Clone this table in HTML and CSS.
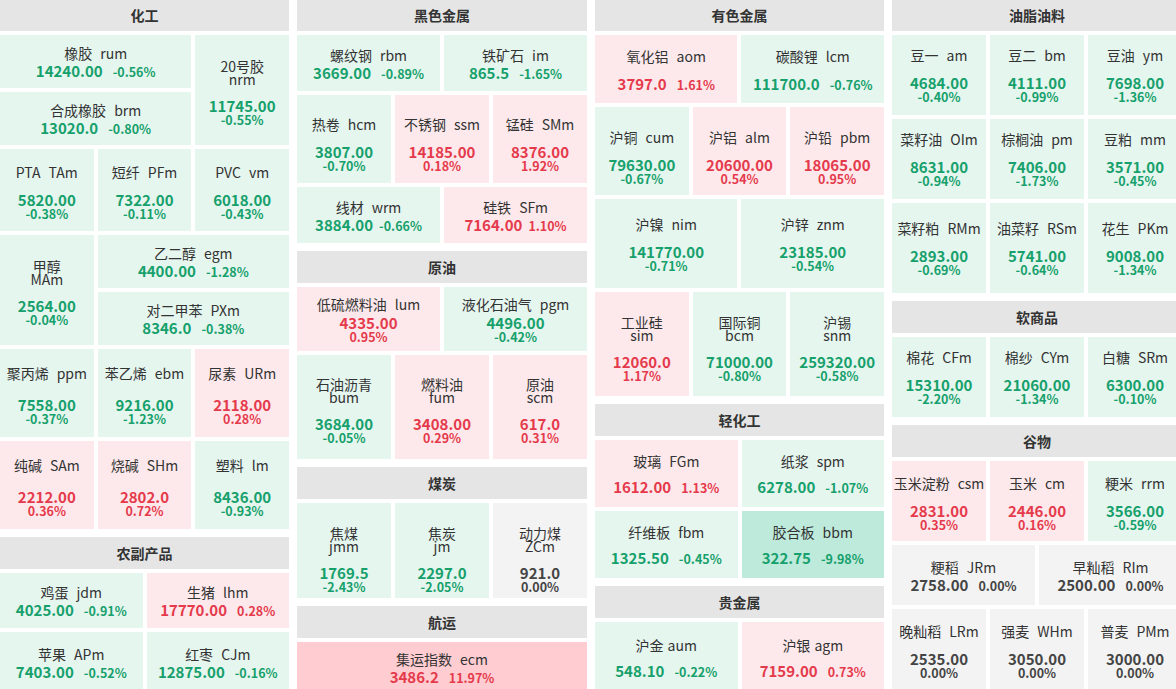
FILE: index.html
```html
<!DOCTYPE html>
<html lang="zh-CN">
<head>
<meta charset="utf-8">
<title>期货行情板块</title>
<link rel="stylesheet" href="styles.css">
</head>
<body>
<div class="board">

  <!-- Column 1 -->
  <div class="col">
    <section class="sec">
      <h2 class="sec-title">化工</h2>
      <div class="grid g-chem">
        <div class="cell dn c4 inline"><div class="name">橡胶<span class="code">rum</span></div><div class="val"><span class="num">14240.00</span><span class="pct">-0.56%</span></div></div>
        <div class="cell dn c2 r2 pad-6"><div class="name two">20号胶<br>nrm</div><div class="val"><span class="num">11745.00</span><span class="pct">-0.55%</span></div></div>
        <div class="cell dn c4 inline"><div class="name">合成橡胶<span class="code">brm</span></div><div class="val"><span class="num">13020.0</span><span class="pct">-0.80%</span></div></div>
        <div class="cell dn c2 pad-4"><div class="name">PTA<span class="code">TAm</span></div><div class="val"><span class="num">5820.00</span><span class="pct">-0.38%</span></div></div>
        <div class="cell dn c2 pad-4"><div class="name">短纤<span class="code">PFm</span></div><div class="val"><span class="num">7322.00</span><span class="pct">-0.11%</span></div></div>
        <div class="cell dn c2 pad-4"><div class="name">PVC<span class="code">vm</span></div><div class="val"><span class="num">6018.00</span><span class="pct">-0.43%</span></div></div>
        <div class="cell dn c2 r2 pad-6"><div class="name two">甲醇<br>MAm</div><div class="val"><span class="num">2564.00</span><span class="pct">-0.04%</span></div></div>
        <div class="cell dn c4 inline"><div class="name">乙二醇<span class="code">egm</span></div><div class="val"><span class="num">4400.00</span><span class="pct">-1.28%</span></div></div>
        <div class="cell dn c4 inline"><div class="name">对二甲苯<span class="code">PXm</span></div><div class="val"><span class="num">8346.0</span><span class="pct">-0.38%</span></div></div>
        <div class="cell dn c2 pad-4 wide-gap"><div class="name">聚丙烯<span class="code">ppm</span></div><div class="val"><span class="num">7558.00</span><span class="pct">-0.37%</span></div></div>
        <div class="cell dn c2 pad-4 wide-gap"><div class="name">苯乙烯<span class="code">ebm</span></div><div class="val"><span class="num">9216.00</span><span class="pct">-1.23%</span></div></div>
        <div class="cell up c2 pad-4 wide-gap"><div class="name">尿素<span class="code">URm</span></div><div class="val"><span class="num">2118.00</span><span class="pct">0.28%</span></div></div>
        <div class="cell up c2 pad-4 wide-gap"><div class="name">纯碱<span class="code">SAm</span></div><div class="val"><span class="num">2212.00</span><span class="pct">0.36%</span></div></div>
        <div class="cell up c2 pad-4 wide-gap"><div class="name">烧碱<span class="code">SHm</span></div><div class="val"><span class="num">2802.0</span><span class="pct">0.72%</span></div></div>
        <div class="cell dn c2 pad-4 wide-gap"><div class="name">塑料<span class="code">lm</span></div><div class="val"><span class="num">8436.00</span><span class="pct">-0.93%</span></div></div>
      </div>
    </section>
    <section class="sec">
      <h2 class="sec-title">农副产品</h2>
      <div class="grid g-agri">
        <div class="cell dn c3 inline"><div class="name">鸡蛋<span class="code">jdm</span></div><div class="val"><span class="num">4025.00</span><span class="pct">-0.91%</span></div></div>
        <div class="cell up c3 inline"><div class="name">生猪<span class="code">lhm</span></div><div class="val"><span class="num">17770.00</span><span class="pct">0.28%</span></div></div>
        <div class="cell dn c3 inline"><div class="name">苹果<span class="code">APm</span></div><div class="val"><span class="num">7403.00</span><span class="pct">-0.52%</span></div></div>
        <div class="cell dn c3 inline"><div class="name">红枣<span class="code">CJm</span></div><div class="val"><span class="num">12875.00</span><span class="pct">-0.16%</span></div></div>
      </div>
    </section>
  </div>

  <!-- Column 2 -->
  <div class="col">
    <section class="sec">
      <h2 class="sec-title">黑色金属</h2>
      <div class="grid g-ferrous">
        <div class="cell dn c3 inline"><div class="name">螺纹钢<span class="code">rbm</span></div><div class="val"><span class="num">3669.00</span><span class="pct">-0.89%</span></div></div>
        <div class="cell dn c3 inline"><div class="name">铁矿石<span class="code">im</span></div><div class="val"><span class="num">865.5</span><span class="pct">-1.65%</span></div></div>
        <div class="cell dn c2 pad-10"><div class="name">热卷<span class="code">hcm</span></div><div class="val"><span class="num">3807.00</span><span class="pct">-0.70%</span></div></div>
        <div class="cell up c2 pad-10"><div class="name">不锈钢<span class="code">ssm</span></div><div class="val"><span class="num">14185.00</span><span class="pct">0.18%</span></div></div>
        <div class="cell up c2 pad-10"><div class="name">锰硅<span class="code">SMm</span></div><div class="val"><span class="num">8376.00</span><span class="pct">1.92%</span></div></div>
        <div class="cell dn c3 inline snug"><div class="name">线材<span class="code">wrm</span></div><div class="val"><span class="num">3884.00</span><span class="pct">-0.66%</span></div></div>
        <div class="cell up c3 inline snug"><div class="name">硅铁<span class="code">SFm</span></div><div class="val"><span class="num">7164.00</span><span class="pct">1.10%</span></div></div>
      </div>
    </section>
    <section class="sec">
      <h2 class="sec-title">原油</h2>
      <div class="grid g-oil">
        <div class="cell up c3 close"><div class="name">低硫燃料油<span class="code">lum</span></div><div class="val"><span class="num">4335.00</span><span class="pct">0.95%</span></div></div>
        <div class="cell dn c3 close"><div class="name">液化石油气<span class="code">pgm</span></div><div class="val"><span class="num">4496.00</span><span class="pct">-0.42%</span></div></div>
        <div class="cell dn c2 pad-8"><div class="name two">石油沥青<br>bum</div><div class="val"><span class="num">3684.00</span><span class="pct">-0.05%</span></div></div>
        <div class="cell up c2 pad-8"><div class="name two">燃料油<br>fum</div><div class="val"><span class="num">3408.00</span><span class="pct">0.29%</span></div></div>
        <div class="cell up c2 pad-8"><div class="name two">原油<br>scm</div><div class="val"><span class="num">617.0</span><span class="pct">0.31%</span></div></div>
      </div>
    </section>
    <section class="sec">
      <h2 class="sec-title">煤炭</h2>
      <div class="grid g-coal">
        <div class="cell dn c2 pad-18"><div class="name two">焦煤<br>jmm</div><div class="val"><span class="num">1769.5</span><span class="pct">-2.43%</span></div></div>
        <div class="cell dn c2 pad-18"><div class="name two">焦炭<br>jm</div><div class="val"><span class="num">2297.0</span><span class="pct">-2.05%</span></div></div>
        <div class="cell eq c2 pad-18"><div class="name two">动力煤<br>ZCm</div><div class="val"><span class="num">921.0</span><span class="pct">0.00%</span></div></div>
      </div>
    </section>
    <section class="sec">
      <h2 class="sec-title">航运</h2>
      <div class="grid g-ship">
        <div class="cell up lim-up c6 inline"><div class="name">集运指数<span class="code">ecm</span></div><div class="val"><span class="num">3486.2</span><span class="pct">11.97%</span></div></div>
      </div>
    </section>
  </div>

  <!-- Column 3 -->
  <div class="col">
    <section class="sec">
      <h2 class="sec-title">有色金属</h2>
      <div class="grid g-nonfer">
        <div class="cell up c3 inline loose"><div class="name">氧化铝<span class="code">aom</span></div><div class="val"><span class="num">3797.0</span><span class="pct">1.61%</span></div></div>
        <div class="cell dn c3 inline loose"><div class="name">碳酸锂<span class="code">lcm</span></div><div class="val"><span class="num">111700.0</span><span class="pct">-0.76%</span></div></div>
        <div class="cell dn c2 pad-12"><div class="name">沪铜<span class="code">cum</span></div><div class="val"><span class="num">79630.00</span><span class="pct">-0.67%</span></div></div>
        <div class="cell up c2 pad-12"><div class="name">沪铝<span class="code">alm</span></div><div class="val"><span class="num">20600.00</span><span class="pct">0.54%</span></div></div>
        <div class="cell up c2 pad-12"><div class="name">沪铅<span class="code">pbm</span></div><div class="val"><span class="num">18065.00</span><span class="pct">0.95%</span></div></div>
        <div class="cell dn c3"><div class="name">沪镍<span class="code">nim</span></div><div class="val"><span class="num">141770.00</span><span class="pct">-0.71%</span></div></div>
        <div class="cell dn c3"><div class="name">沪锌<span class="code">znm</span></div><div class="val"><span class="num">23185.00</span><span class="pct">-0.54%</span></div></div>
        <div class="cell up c2 pad-10"><div class="name two">工业硅<br>sim</div><div class="val"><span class="num">12060.0</span><span class="pct">1.17%</span></div></div>
        <div class="cell dn c2 pad-10"><div class="name two">国际铜<br>bcm</div><div class="val"><span class="num">71000.00</span><span class="pct">-0.80%</span></div></div>
        <div class="cell dn c2 pad-10"><div class="name two">沪锡<br>snm</div><div class="val"><span class="num">259320.00</span><span class="pct">-0.58%</span></div></div>
      </div>
    </section>
    <section class="sec">
      <h2 class="sec-title">轻化工</h2>
      <div class="grid g-light">
        <div class="cell up c3 inline mid"><div class="name">玻璃<span class="code">FGm</span></div><div class="val"><span class="num">1612.00</span><span class="pct">1.13%</span></div></div>
        <div class="cell dn c3 inline mid"><div class="name">纸浆<span class="code">spm</span></div><div class="val"><span class="num">6278.00</span><span class="pct">-1.07%</span></div></div>
        <div class="cell dn c3 inline mid"><div class="name">纤维板<span class="code">fbm</span></div><div class="val"><span class="num">1325.50</span><span class="pct">-0.45%</span></div></div>
        <div class="cell dn lim-dn c3 inline mid"><div class="name">胶合板<span class="code">bbm</span></div><div class="val"><span class="num">322.75</span><span class="pct">-9.98%</span></div></div>
      </div>
    </section>
    <section class="sec">
      <h2 class="sec-title">贵金属</h2>
      <div class="grid g-prec">
        <div class="cell dn c3 inline mid"><div class="name">沪金<span class="code sp">aum</span></div><div class="val"><span class="num">548.10</span><span class="pct">-0.22%</span></div></div>
        <div class="cell up c3 inline mid"><div class="name">沪银<span class="code sp">agm</span></div><div class="val"><span class="num">7159.00</span><span class="pct">0.73%</span></div></div>
      </div>
    </section>
  </div>

  <!-- Column 4 -->
  <div class="col">
    <section class="sec">
      <h2 class="sec-title">油脂油料</h2>
      <div class="grid g-oils">
        <div class="cell dn c2"><div class="name">豆一<span class="code">am</span></div><div class="val"><span class="num">4684.00</span><span class="pct">-0.40%</span></div></div>
        <div class="cell dn c2"><div class="name">豆二<span class="code">bm</span></div><div class="val"><span class="num">4111.00</span><span class="pct">-0.99%</span></div></div>
        <div class="cell dn c2"><div class="name">豆油<span class="code">ym</span></div><div class="val"><span class="num">7698.00</span><span class="pct">-1.36%</span></div></div>
        <div class="cell dn c2"><div class="name">菜籽油<span class="code">OIm</span></div><div class="val"><span class="num">8631.00</span><span class="pct">-0.94%</span></div></div>
        <div class="cell dn c2"><div class="name">棕榈油<span class="code">pm</span></div><div class="val"><span class="num">7406.00</span><span class="pct">-1.73%</span></div></div>
        <div class="cell dn c2"><div class="name">豆粕<span class="code">mm</span></div><div class="val"><span class="num">3571.00</span><span class="pct">-0.45%</span></div></div>
        <div class="cell dn c2"><div class="name">菜籽粕<span class="code">RMm</span></div><div class="val"><span class="num">2893.00</span><span class="pct">-0.69%</span></div></div>
        <div class="cell dn c2"><div class="name">油菜籽<span class="code">RSm</span></div><div class="val"><span class="num">5741.00</span><span class="pct">-0.64%</span></div></div>
        <div class="cell dn c2"><div class="name">花生<span class="code">PKm</span></div><div class="val"><span class="num">9008.00</span><span class="pct">-1.34%</span></div></div>
      </div>
    </section>
    <section class="sec">
      <h2 class="sec-title">软商品</h2>
      <div class="grid g-soft">
        <div class="cell dn c2"><div class="name">棉花<span class="code">CFm</span></div><div class="val"><span class="num">15310.00</span><span class="pct">-2.20%</span></div></div>
        <div class="cell dn c2"><div class="name">棉纱<span class="code">CYm</span></div><div class="val"><span class="num">21060.00</span><span class="pct">-1.34%</span></div></div>
        <div class="cell dn c2"><div class="name">白糖<span class="code">SRm</span></div><div class="val"><span class="num">6300.00</span><span class="pct">-0.10%</span></div></div>
      </div>
    </section>
    <section class="sec">
      <h2 class="sec-title">谷物</h2>
      <div class="grid g-grain">
        <div class="cell up c2 pad-4"><div class="name">玉米淀粉<span class="code">csm</span></div><div class="val"><span class="num">2831.00</span><span class="pct">0.35%</span></div></div>
        <div class="cell up c2 pad-4"><div class="name">玉米<span class="code">cm</span></div><div class="val"><span class="num">2446.00</span><span class="pct">0.16%</span></div></div>
        <div class="cell dn c2 pad-4"><div class="name">粳米<span class="code">rrm</span></div><div class="val"><span class="num">3566.00</span><span class="pct">-0.59%</span></div></div>
        <div class="cell eq c3 inline"><div class="name">粳稻<span class="code">JRm</span></div><div class="val"><span class="num">2758.00</span><span class="pct">0.00%</span></div></div>
        <div class="cell eq c3 inline"><div class="name">早籼稻<span class="code">RIm</span></div><div class="val"><span class="num">2500.00</span><span class="pct">0.00%</span></div></div>
        <div class="cell eq c2 pad-4"><div class="name">晚籼稻<span class="code">LRm</span></div><div class="val"><span class="num">2535.00</span><span class="pct">0.00%</span></div></div>
        <div class="cell eq c2 pad-4"><div class="name">强麦<span class="code">WHm</span></div><div class="val"><span class="num">3050.00</span><span class="pct">0.00%</span></div></div>
        <div class="cell eq c2 pad-4"><div class="name">普麦<span class="code">PMm</span></div><div class="val"><span class="num">3000.00</span><span class="pct">0.00%</span></div></div>
      </div>
    </section>
  </div>

</div>
</body>
</html>
```

FILE: styles.css
```css
html, body {
  margin: 0;
  padding: 0;
  background: #ffffff;
  overflow: hidden;
}

body {
  font-family: "Microsoft YaHei", "Noto Sans CJK SC", sans-serif;
  color: #333333;
}

.board {
  display: grid;
  grid-template-columns: 289px 290px 289px 290px;
  column-gap: 8px;
  width: 1182px;
  margin-top: -1px;
  align-items: start;
}

.col {
  display: flex;
  flex-direction: column;
  gap: 8px;
}

.sec-title {
  margin: 0 0 4px;
  height: 32px;
  line-height: 32px;
  background: #e5e5e5;
  text-align: center;
  font-size: 14px;
  font-weight: 700;
  color: #333333;
}

.grid {
  display: grid;
  grid-template-columns: repeat(6, 1fr);
  gap: 4px;
}

/* row heights per section */
.g-chem    { grid-template-rows: 53px 53px 82px 53px 53px 88px 88px; }
.g-agri    { grid-template-rows: 55px 60px; }
.g-ferrous { grid-template-rows: 56px 88px 56px; }
.g-oil     { grid-template-rows: 64px 104px; }
.g-coal    { grid-template-rows: 95px; }
.g-ship    { grid-template-rows: 50px; }
.g-nonfer  { grid-template-rows: 68px 88px 89px 104px; }
.g-light   { grid-template-rows: 67px 67px; }
.g-prec    { grid-template-rows: 70px; }
.g-oils    { grid-template-rows: 80px 80px 90px; }
.g-soft    { grid-template-rows: 80px; }
.g-grain   { grid-template-rows: 80px 60px 80px; }

.c2 { grid-column: span 2; }
.c3 { grid-column: span 3; }
.c4 { grid-column: span 4; }
.c6 { grid-column: span 6; }
.r2 { grid-row: span 2; }

.cell {
  display: flex;
  flex-direction: column;
  align-items: center;
  justify-content: center;
  text-align: center;
  white-space: nowrap;
  overflow: hidden;
}

/* shift centred content downward */
.pad-4  { padding-top: 4px; }
.pad-6  { padding-top: 6px; }
.pad-8  { padding-top: 8px; }
.pad-10 { padding-top: 10px; }
.pad-12 { padding-top: 12px; }
.pad-18 { padding-top: 18px; }

.dn { background: #e5f6ef; }
.up { background: #fde9eb; }
.eq { background: #f3f3f3; }
.lim-dn { background: #bdeadb; }
.lim-up { background: #ffcdd1; }

.name {
  font-size: 14px;
  line-height: 16px;
  color: #333333;
}

.name .code { margin-left: 8px; }
.name .code.sp { margin-left: 4px; }

.name.two { line-height: 13px; }

.val { margin-top: 13px; }
.wide-gap .val { margin-top: 17px; }

.num {
  display: block;
  font-size: 15px;
  font-weight: 700;
  line-height: 14px;
}

.pct {
  display: block;
  font-size: 12.5px;
  font-weight: 700;
  line-height: 13px;
}

.inline .val {
  display: flex;
  align-items: baseline;
  gap: 10px;
  margin-top: 3px;
}

.inline.snug .val { gap: 6px; }
.inline.loose .val { margin-top: 13px; }
.inline.mid .val { margin-top: 11px; }
.close .val { margin-top: 4px; }

.dn .num, .dn .pct { color: #16a06b; }
.up .num, .up .pct { color: #e53a4c; }
.eq .num, .eq .pct { color: #444444; }
```
